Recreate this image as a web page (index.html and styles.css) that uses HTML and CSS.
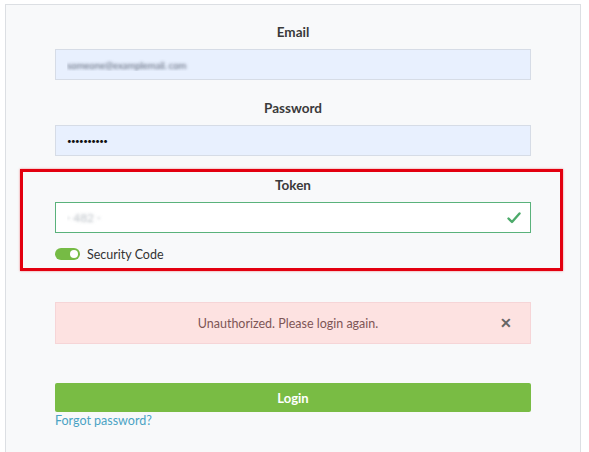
FILE: index.html
```html
<!DOCTYPE html>
<html lang="en">
<head>
    <meta charset="UTF-8">
    <meta name="viewport" content="width=device-width, initial-scale=1.0">
    <title>Login</title>
    <link rel="stylesheet" href="styles.css">
</head>
<body>
    <div class="panel">
        <form class="loginForm">
            <div class="field">
                <label for="email">Email</label>
                <input type="text" id="email" class="blurred" value="someone@examplemail. com">
            </div>
            <div class="field">
                <label for="password">Password</label>
                <input type="password" id="password" value="secret1234">
            </div>

            <div class="highlight">
                <div class="field">
                    <label for="token">Token</label>
                    <div class="tokenWrap">
                        <input type="text" id="token" class="blurred valid" value="· 482 ·">
                        <svg class="check" width="14" height="12" viewBox="0 0 14 12">
                            <polyline points="1.5,6.5 5,10 12.5,1.5" fill="none" stroke="#4caa6a" stroke-width="2.4" stroke-linecap="round" stroke-linejoin="round"/>
                        </svg>
                    </div>
                </div>
                <div class="switchRow">
                    <span class="switch"><span class="knob"></span></span>
                    <span>Security Code</span>
                </div>
            </div>

            <div class="alert">
                <span>Unauthorized. Please login again.</span>
                <span class="close">&#x2715;</span>
            </div>

            <button type="button" class="loginBtn">Login</button>
            <a href="#" class="forgot">Forgot password?</a>
        </form>
    </div>
</body>
</html>
```

FILE: styles.css
```css
body {
    margin: 0;
    background: #ffffff;
    font-family: "Lato", "Open Sans", sans-serif;
    color: #333;
    overflow: hidden;
}
.panel {
    margin: 4px 0 0 5px;
    width: 576px;
    min-height: 470px;
    box-sizing: border-box;
    background: #f8f9fa;
    border: 1px solid #dcdfe3;
    padding-top: 18px;
}
.loginForm {
    width: 476px;
    margin: 0 auto;
    display: flex;
    flex-direction: column;
}
.field {
    display: flex;
    flex-direction: column;
    margin-bottom: 19px;
}
.field label {
    text-align: center;
    font-size: 13.5px;
    font-weight: 700;
    line-height: 18px;
    color: #3a3a3a;
    margin-bottom: 8px;
}
.field input {
    height: 31px;
    box-sizing: border-box;
    border: 1px solid #d6dce6;
    background: #e8f0fe;
    padding: 0 11px;
    font-family: inherit;
    font-size: 12px;
    color: #222;
    outline: none;
}
#email {
    font-size: 10px;
    letter-spacing: -0.3px;
}
#password {
    font-size: 8px;
    letter-spacing: -0.6px;
    color: #111;
}
.blurred {
    color: transparent !important;
    text-shadow: 0 0 3px rgba(70, 80, 100, 0.85);
}
.highlight {
    margin: -6px -32px 0 -35px;
    padding: 4px 29px 5px 32px;
    border: 3px solid #e3000f;
    box-shadow: 0 0 2px rgba(227, 0, 15, 0.5);
}
.highlight .field {
    margin-bottom: 0;
}
.tokenWrap {
    position: relative;
}
.field input.valid {
    width: 100%;
    background: #ffffff;
    border-color: #5ab27b;
    text-shadow: 0 0 3px rgba(140, 150, 160, 0.6);
}
.check {
    position: absolute;
    right: 10px;
    top: 10px;
}
.switchRow {
    display: flex;
    align-items: center;
    gap: 7px;
    margin-top: 12px;
    height: 18px;
    font-size: 12.5px;
    color: #333;
}
.switch {
    width: 25px;
    height: 12px;
    border-radius: 6px;
    background: #76bb45;
    position: relative;
}
.knob {
    position: absolute;
    right: 2px;
    top: 2px;
    width: 8px;
    height: 8px;
    border-radius: 50%;
    background: #ffffff;
}
.alert {
    margin-top: 31px;
    height: 42px;
    box-sizing: border-box;
    background: #fde2e1;
    border: 1px solid #f6d5d7;
    display: flex;
    align-items: center;
    justify-content: center;
    position: relative;
    font-size: 12.5px;
    color: #7d5656;
    padding-right: 10px;
}
.close {
    position: absolute;
    right: 18px;
    top: 11px;
    font-size: 14px;
    font-weight: 700;
    color: #666;
}
.loginBtn {
    margin-top: 39px;
    height: 29px;
    border: none;
    border-radius: 2px;
    background: #79bc44;
    color: #ffffff;
    font-family: inherit;
    font-size: 13px;
    font-weight: 700;
}
.forgot {
    margin-top: 1px;
    line-height: 16px;
    font-size: 12.5px;
    color: #4aa3c4;
    text-decoration: none;
    width: fit-content;
}
```
